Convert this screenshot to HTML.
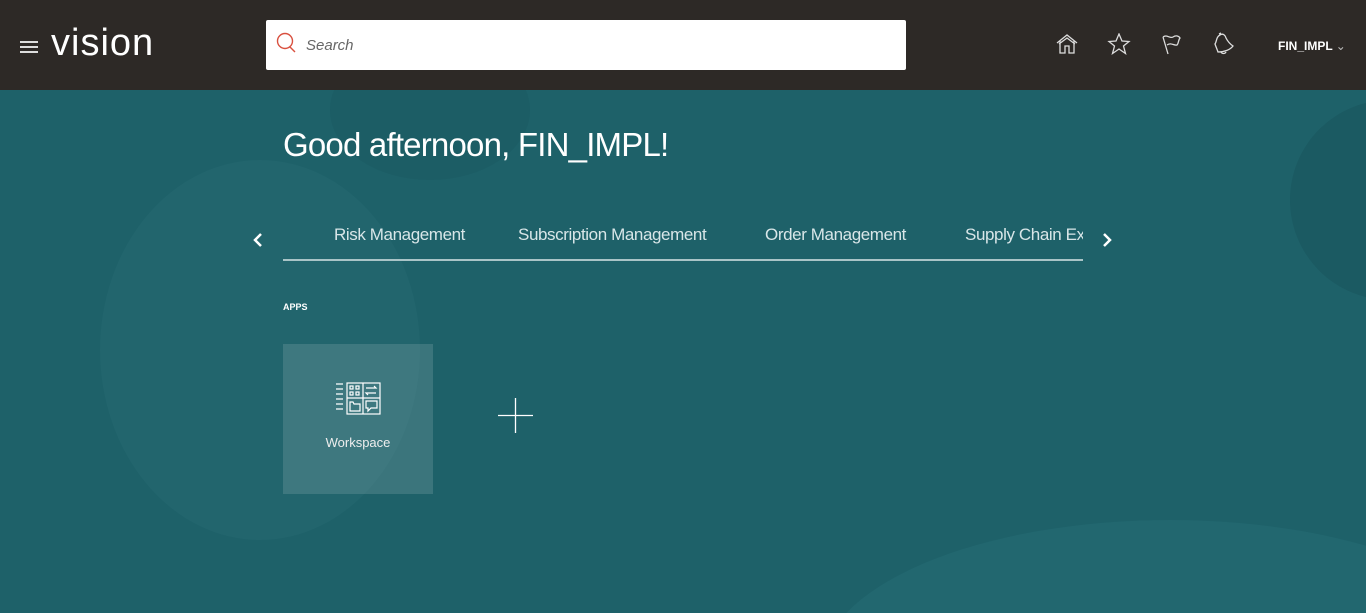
<!DOCTYPE html>
<html><head><style>
*{margin:0;padding:0;box-sizing:border-box}
html,body{width:1366px;height:613px;overflow:hidden}
body{font-family:"Liberation Sans",sans-serif;background:#1e6169}
.wrap{position:relative;width:1366px;height:613px;overflow:hidden}
.hdr{position:absolute;left:0;top:0;width:1366px;height:90px;background:#2d2926}
.burger{position:absolute;left:20px;top:41px;width:18px}
.burger i{display:block;height:2px;background:#ddd;margin-bottom:3px}
.logo{position:absolute;left:51px;top:22px;color:#fff;font-size:38px;letter-spacing:1px}
.search{position:absolute;left:266px;top:20px;width:640px;height:50px;background:#fff;border-radius:2px}
.search span{position:absolute;left:40px;top:17px;font-size:15px;font-style:italic;color:#666}
.user{position:absolute;left:1278px;top:39px;color:#fff;font-size:12px;font-weight:bold}
.bg{position:absolute;border-radius:50%}
.greet{position:absolute;left:283px;top:126px;color:#fff;font-size:33px;letter-spacing:-0.8px}
.tabs{position:absolute;top:225px;color:#d8e6e8;font-size:17px;letter-spacing:-0.4px;white-space:nowrap}
.line{position:absolute;left:283px;top:259px;width:800px;height:2px;background:#a9c4c7}
.apps{position:absolute;left:283px;top:302px;color:#fff;font-size:9px;font-weight:bold}
.tile{position:absolute;left:283px;top:344px;width:150px;height:150px;background:rgba(255,255,255,.13)}
.tile span{position:absolute;left:0;width:150px;top:91px;text-align:center;color:#eee;font-size:13px}
</style></head><body><div class="wrap">
<div class="bg" style="left:100px;top:160px;width:320px;height:380px;background:#246870;opacity:.6"></div>
<div class="bg" style="left:330px;top:40px;width:200px;height:140px;background:#1b5a62;opacity:.6"></div>
<div class="bg" style="left:1290px;top:100px;width:200px;height:200px;background:#1b5a62"></div>
<div class="bg" style="left:820px;top:520px;width:700px;height:300px;background:#246a72;opacity:.7"></div>
<div class="hdr"></div>
<div class="burger"><i></i><i></i><i></i></div>
<div class="logo">vision</div>
<div class="search">
<svg style="position:absolute;left:10px;top:12px" width="22" height="24" viewBox="0 0 22 24"><circle cx="9" cy="9" r="7.5" fill="none" stroke="#d9503f" stroke-width="1.4"/><path d="M14 15l5 5" stroke="#d9503f" stroke-width="1.4"/></svg>
<span>Search</span></div>
<svg style="position:absolute;left:1055px;top:33px" width="24" height="22" viewBox="0 0 24 22" fill="none" stroke="#ddd" stroke-width="1.3"><path d="M2 10L12 2l10 8M5 8v12h5v-7h4v7h5V8M4 11l8-6 8 6"/></svg>
<svg style="position:absolute;left:1107px;top:33px" width="24" height="22" viewBox="0 0 24 22" fill="none" stroke="#ddd" stroke-width="1.3"><path d="M12 1l3 7 7 .5-5.5 4.5 2 7.5L12 16l-6.5 4.5 2-7.5L2 8.5 9 8z"/></svg>
<svg style="position:absolute;left:1160px;top:33px" width="24" height="22" viewBox="0 0 24 22" fill="none" stroke="#ddd" stroke-width="1.3"><path d="M3 4l5 17M3 4c4-3 7 2 10 0s6-1 7 1c-2 2-1 5-3 7-3 1-6-3-10 0"/></svg>
<svg style="position:absolute;left:1212px;top:32px" width="24" height="24" viewBox="0 0 24 24" fill="none" stroke="#ddd" stroke-width="1.3"><path d="M8 3c3-2 5 0 6 3 2 4 4 6 7 8-3 4-9 6-15 6-1-3-2-5-3-8 2-3 1-7 5-9zM9 20c1 2 4 2 5 0M7 2l2-1"/></svg>
<div class="user">FIN_IMPL <span style="font-weight:normal;color:#bbb">&#8964;</span></div>
<div class="greet">Good afternoon, FIN_IMPL!</div>
<svg style="position:absolute;left:252px;top:232px" width="12" height="16"><path d="M9 2L3 8l6 6" fill="none" stroke="#fff" stroke-width="2.5"/></svg>
<svg style="position:absolute;left:1101px;top:232px" width="12" height="16"><path d="M3 2l6 6-6 6" fill="none" stroke="#fff" stroke-width="2.5"/></svg>
<div class="tabs" style="left:334px">Risk Management</div>
<div class="tabs" style="left:518px">Subscription Management</div>
<div class="tabs" style="left:765px">Order Management</div>
<div style="position:absolute;left:965px;top:222px;width:118px;height:28px;overflow:hidden"><div class="tabs" style="left:0;top:3px">Supply Chain Execution</div></div>
<div class="line"></div>
<div class="apps">APPS</div>
<div class="tile">
<svg style="position:absolute;left:53px;top:38px" width="46" height="34" viewBox="0 0 46 34" fill="none" stroke="#fff" stroke-width="1.2"><path d="M0 2h7M0 7h7M0 12h7M0 17h7M0 22h7M0 27h7"/><rect x="11" y="1" width="33" height="31"/><path d="M27 1v31M11 16h33"/><rect x="14" y="4" width="3" height="3"/><rect x="20" y="4" width="3" height="3"/><rect x="14" y="10" width="3" height="3"/><rect x="20" y="10" width="3" height="3"/><path d="M30 6h10l-2-2M40 11H30l2 2M14 20h3l1 2h6v7H14zM30 19h11v7h-6l-3 3v-3h-2z"/></svg>
<span>Workspace</span></div>
<svg style="position:absolute;left:498px;top:398px" width="36" height="36"><path d="M17.5 0v35M0 17.5h35" stroke="#fff" stroke-width="1.3"/></svg>
</div></body></html>
